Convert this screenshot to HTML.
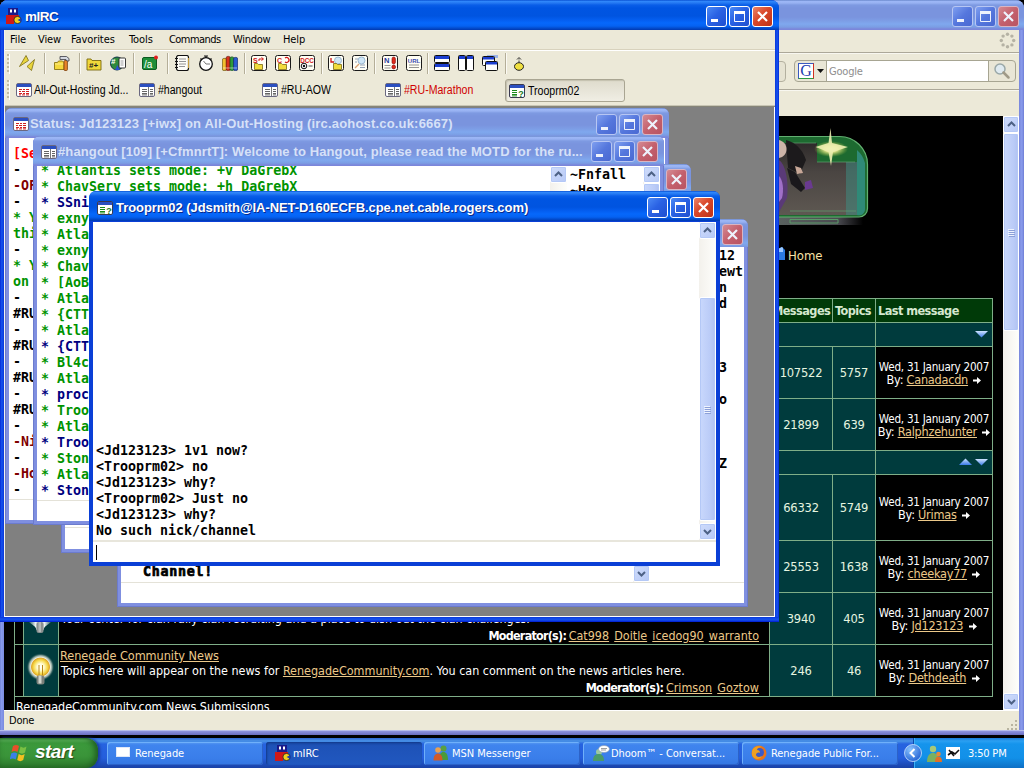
<!DOCTYPE html>
<html><head><meta charset="utf-8"><title>Desktop</title>
<style>
*{box-sizing:border-box;margin:0;padding:0}
html,body{width:1024px;height:768px;overflow:hidden;background:#000}
body{position:relative;font-family:"DejaVu Sans Condensed","Liberation Sans",sans-serif;font-size:11px;color:#000}
.a{position:absolute}
.ui{font-family:"DejaVu Sans Condensed","Liberation Sans",sans-serif;font-size:11px;white-space:nowrap;letter-spacing:-0.2px}
.fx{font-family:"DejaVu Sans Mono","Liberation Mono",monospace;font-weight:bold;font-size:13.3px;line-height:16px;white-space:pre}
.fx div{height:16px}
.tt{font-family:"Liberation Sans",sans-serif;font-weight:bold;font-size:13px;white-space:nowrap;color:#fff;text-shadow:1px 1px 0 #0a2a8a}
.tti{font-family:"Liberation Sans",sans-serif;font-weight:bold;font-size:13px;white-space:nowrap;color:#d6e1f8}
.sb{font-family:"Liberation Sans",sans-serif;font-size:12px;white-space:nowrap;transform-origin:0 0}
.g{color:#009300}.n{color:#00007f}.m{color:#7f0000}.r{color:#ff0000}
/* caption buttons */
.cb{position:absolute;width:21px;height:21px;border:1px solid #fff;border-radius:3px;background:linear-gradient(135deg,#4b8af5 0,#2a62e4 45%,#1f4fd0 100%)}
.cb.x{background:linear-gradient(135deg,#ec8468 0,#d9472a 45%,#bd3216 100%)}
.cb.i{border-color:#b7c6f3;background:linear-gradient(135deg,#7f9ff0 0,#5577dd 50%,#4a69d2 100%)}
.cb.i.x{border-color:#d9b5c3;background:linear-gradient(135deg,#d48a92 0,#c4606d 50%,#b85462 100%)}
.cb svg{position:absolute;left:0;top:0}
/* firefox */
#ff{left:0;top:0;width:1024px;height:735px;border-radius:8px 8px 0 0;overflow:hidden;background:linear-gradient(90deg,#6a7ad0 0,#8a9cec 1px,#7f90e4 3px,#7b8ade 4px,#7b8ade 1020px,#8a9cec 1021px,#7f90e4 1023px,#6a7ad0 1024px)}
#fftitle{left:0;top:0;width:1024px;height:30px;background:linear-gradient(#6a88cc 0,#9cb6f6 1.5px,#98b2f2 3px,#7e9ae2 5px,#7a94de 8px,#7a94de 17px,#7d9ee6 21px,#7fa8ee 24px,#7b9ee4 27px,#7b86da 29px,#7b86da 30px)}
#ffchrome{left:4px;top:30px;width:1015px;height:86px;background:#ece9d8}
#ffpage{left:4px;top:116px;width:999px;height:594px;background:#000;overflow:hidden;font-family:"DejaVu Sans Condensed","Liberation Sans",sans-serif;font-size:12.4px;color:#fff;white-space:nowrap}
#ffstatus{left:4px;top:710px;width:1015px;height:20px;background:#ece9d8;border-top:1px solid #fff}
#ffbot{left:0;top:730px;width:1024px;height:5px;background:linear-gradient(#cdd2f4 0,#8a90dc 1.5px,#7b80d2 3px,#6a6ec0 5px)}
/* mirc */
#mirc{left:0;top:0;width:779px;height:622px;background:linear-gradient(90deg,#0019cf 0,#1450ec 1px,#1048e6 3px,#0831d9 4px,#0831d9 775px,#1048e6 776px,#1450ec 778px,#0019cf 779px);border-radius:8px 8px 0 0}
#mbot{left:0;top:617px;width:779px;height:5px;background:linear-gradient(#0831d9 0,#1048e6 1px,#1450ec 3px,#0019cf 5px)}
#mtitle{left:0;top:0;width:779px;height:30px;border-radius:8px 8px 0 0;background:linear-gradient(#0a52d4 0,#2f86fa 1.5px,#2478f2 3px,#0a5ee8 5px,#0055e2 8px,#0054e0 16px,#045ef0 20px,#0668fb 23px,#0562f2 26px,#034ed0 28px,#0038b0 30px)}
#mchrome{left:4px;top:30px;width:771px;height:77px;background:#ece9d8}
#mdi{left:4px;top:107px;width:771px;height:510px;background:#808080;overflow:hidden}
.sep{position:absolute;top:53px;width:2px;height:22px;border-left:1px solid #aca899;border-right:1px solid #fff}
/* mdi child */
.w{position:absolute;border-radius:7px 7px 0 0}
.w.i{background:#7f8fe0;box-shadow:inset 0 0 0 1px #6c7bcd}
.w.ac{background:#0a3fd6}
.w .t{position:absolute;left:0;top:0;right:0;height:30px;border-radius:7px 7px 0 0}
.w.i .t{background:linear-gradient(#6a88cc 0,#9cb6f6 1.5px,#98b2f2 3px,#7e9ae2 5px,#7a94de 8px,#7a94de 17px,#7d9ee6 21px,#7fa8ee 24px,#7b9ee4 27px,#7b86da 29px,#7b86da 30px)}
.w.ac .t{background:linear-gradient(#0a52d4 0,#2f86fa 1.5px,#2478f2 3px,#0a5ee8 5px,#0055e2 8px,#0054e0 16px,#045ef0 20px,#0668fb 23px,#0562f2 26px,#034ed0 28px,#0038b0 30px)}
.w .c{position:absolute;left:4px;top:30px;right:4px;bottom:4px;background:#fff;overflow:hidden}
/* xp scrollbar */
.sv{position:absolute;width:17px;background:linear-gradient(90deg,#f3f1ec,#fefefb)}
.sbtn{position:absolute;left:0;width:17px;height:17px;border:1px solid #fff;border-radius:2px;background:linear-gradient(135deg,#cfdcfb,#b7c9f6);box-shadow:inset 0 0 0 1px #b4c8f6}
.sth{position:absolute;left:0;width:17px;border:1px solid #fff;border-radius:2px;background:linear-gradient(90deg,#c9d8fc,#bacbf7 70%,#b0c2f2);box-shadow:inset 0 0 0 1px #b4c8f6}
/* taskbar */
#tb{left:0;top:738px;width:1024px;height:30px;background:linear-gradient(#3168d5 0,#4993e6 3px,#2663e0 6px,#245edc 20px,#1941a5 30px)}
</style></head><body>
<div id="ff" class="a">
<div id="fftitle" class="a"></div>
<div class="cb i" style="left:952px;top:6px"><svg width="19" height="19" viewBox="0 0 19 19"><rect x="4" y="12" width="7" height="3" fill="#eef2fc"/></svg></div><div class="cb i" style="left:975px;top:6px"><svg width="19" height="19" viewBox="0 0 19 19"><path d="M4.5 5.5h10v9h-10z M4.5 6.5h10" fill="none" stroke="#eef2fc" stroke-width="1"/><rect x="4" y="4" width="11" height="3" fill="#eef2fc"/></svg></div><div class="cb x i" style="left:998px;top:6px"><svg width="19" height="19" viewBox="0 0 19 19"><path d="M5 5l9 9M14 5l-9 9" stroke="#eef2fc" stroke-width="2.2" fill="none"/></svg></div><div id="ffchrome" class="a"><div class="a" style="left:0px;top:22px;width:1015px;height:1px;background:#aca899;"></div><div class="a" style="left:0px;top:23px;width:1015px;height:1px;background:#f8f7f0;"></div><div class="a" style="left:0px;top:59px;width:1015px;height:1px;background:#aca899;"></div><div class="a" style="left:0px;top:60px;width:1015px;height:1px;background:#f8f7f0;"></div><div class="a" style="left:696px;top:31px;width:86px;height:21px;background:#e6e3d2;border:1px solid #b3b09f;border-radius:4px"></div><div class="a" style="left:790px;top:30px;width:222px;height:22px;background:#e9e6d6;border:1px solid #a7a592;border-radius:4px"></div><div class="a" style="left:822px;top:31px;width:163px;height:20px;background:#fff;border-left:1px solid #a7a592;border-right:1px solid #a7a592"></div><div class="a" style="left:794px;top:33px;width:16px;height:16px;background:#fff;border:1px solid #3a5ac0;border-right-color:#d03020;border-bottom-color:#2a9a40;font-family:'Liberation Serif',serif;font-size:16px;line-height:13px;color:#2040b0;text-align:center">G</div><svg class="a" style="left:813px;top:39px" width="7" height="4" viewBox="0 0 7 4"><path d="M0 0h7l-3.500 4z" fill="#111"/></svg><span class="a" style="left:825px;top:35px;font-size:11px;color:#8e8e8e;letter-spacing:-0.2px">Google</span><svg class="a" style="left:989px;top:32px" width="18" height="18" viewBox="0 0 18 18"><circle cx="7" cy="7" r="5" fill="#dfeaf0" stroke="#9aa8a8" stroke-width="1.500"/><path d="M10.500 10.500l5 5" stroke="#a09a88" stroke-width="2.500" stroke-linecap="round"/></svg><svg class="a" style="left:995px;top:2px" width="17" height="17" viewBox="0 0 17 17"><circle cx="14.7" cy="8.5" r="1.7" fill="#b5b2a4"/><circle cx="12.9" cy="12.9" r="1.7" fill="#b5b2a4"/><circle cx="8.5" cy="14.7" r="1.7" fill="#b5b2a4"/><circle cx="4.1" cy="12.9" r="1.7" fill="#b5b2a4"/><circle cx="2.3" cy="8.5" r="1.7" fill="#b5b2a4"/><circle cx="4.1" cy="4.1" r="1.7" fill="#b5b2a4"/><circle cx="8.5" cy="2.3" r="1.7" fill="#b5b2a4"/><circle cx="12.9" cy="4.1" r="1.7" fill="#b5b2a4"/></svg></div>
<div id="ffpage" class="a"><svg class="a" style="left:766px;top:10px" width="110" height="104" viewBox="770 126 110 104">
<defs><radialGradient id="fl"><stop offset="0" stop-color="#f4fbe8"/><stop offset="0.4" stop-color="#e6e890" stop-opacity="0.95"/><stop offset="1" stop-color="#a0c040" stop-opacity="0"/></radialGradient>
<linearGradient id="stn" x1="0" y1="0" x2="0" y2="1"><stop offset="0" stop-color="#2e2a2a"/><stop offset="0.4" stop-color="#4a4542"/><stop offset="1" stop-color="#5e5852"/></linearGradient>
<linearGradient id="bs" x1="0" y1="0" x2="1" y2="0"><stop offset="0" stop-color="#5a6260"/><stop offset="0.7" stop-color="#4a4a50"/><stop offset="1" stop-color="#000"/></linearGradient></defs>
<path d="M779 217h84v8h-84z" fill="url(#bs)"/>
<path d="M779 136.500h60a28 28 0 0 1 28.500 28v44a8.500 8.500 0 0 1-8.500 8.500h-80z" fill="#1d6a30"/>
<path d="M779 143h38v19h40v53h-78z" fill="url(#stn)"/>
<path d="M857 150v65a6 6 0 0 0 8-6v-46a26 26 0 0 0-8-13z" fill="#2f8a78"/>
<path d="M846 162h11v53h-11z" fill="#3f8a80" opacity="0.55"/>
<path d="M779 136.500h60a28 28 0 0 1 28.500 28v44a8.500 8.500 0 0 1-8.500 8.500h-80" fill="none" stroke="#62b070" stroke-width="1.200"/>
<path d="M790 143h26M817 162h38M790 211h66" stroke="#62a070" stroke-width="1" opacity="0.7"/>
<path d="M790 219.500h48v3.500h-48z" fill="none" stroke="#5a9a68" stroke-width="1"/>
<path d="M786 140c8 2 16 8 20 20l-6 14-12-6z" fill="#1c1a1c"/>
<path d="M779 140c4 1 7.500 4 7.500 9s-3 8-7.500 9z" fill="#cdb4a8"/>
<path d="M779 160c6 4 10 20 8 38l-8 14z" fill="#5a3a78"/>
<path d="M779 176c4 4 5 14 3 22l-3 4z" fill="#a070c8"/>
<path d="M787 168l8 4 10 16-4 4-10-8z" fill="#1a181c"/>
<path d="M795 166l6 2 2 5-6 1z" fill="#c8a898"/>
<path d="M805 182l6-2 2 8-8 2z" fill="#6a3a90"/>
<ellipse cx="831" cy="149" rx="17" ry="8" fill="url(#fl)"/>
<path d="M830.500 128l1.500 15 16 4-15 5-2 14-2.500-14-13-5 13-4z" fill="#eef0b0" opacity="0.9"/>
</svg><svg class="a" style="left:774px;top:131px" width="8" height="14" viewBox="0 0 8 14"><path d="M0 2l4-2 3 3v10h-7z" fill="#2a7ae0"/><path d="M0 2l4-2 1 1v4h-5z" fill="#9ac8ff"/></svg><div class="a " style="left:784px;top:132px;color:#f7e2a6;font-size:13px">Home</div><div class="a" style="left:10px;top:182px;width:979px;height:25px;background:#003a08;"></div><div class="a" style="left:10px;top:207px;width:979px;height:24px;background:#003b3d;"></div><div class="a" style="left:20px;top:231px;width:34px;height:52px;background:#003b3d;"></div><div class="a" style="left:766px;top:231px;width:105px;height:52px;background:#003b3d;"></div><div class="a" style="left:20px;top:283px;width:34px;height:52px;background:#003b3d;"></div><div class="a" style="left:766px;top:283px;width:105px;height:52px;background:#003b3d;"></div><div class="a" style="left:10px;top:335px;width:979px;height:24px;background:#003b3d;"></div><div class="a" style="left:20px;top:359px;width:34px;height:66px;background:#003b3d;"></div><div class="a" style="left:766px;top:359px;width:105px;height:66px;background:#003b3d;"></div><div class="a" style="left:20px;top:425px;width:34px;height:52px;background:#003b3d;"></div><div class="a" style="left:766px;top:425px;width:105px;height:52px;background:#003b3d;"></div><div class="a" style="left:20px;top:477px;width:34px;height:52px;background:#003b3d;"></div><div class="a" style="left:766px;top:477px;width:105px;height:52px;background:#003b3d;"></div><div class="a" style="left:20px;top:529px;width:34px;height:52px;background:#003b3d;"></div><div class="a" style="left:766px;top:529px;width:105px;height:52px;background:#003b3d;"></div><div class="a" style="left:10px;top:182px;width:979px;height:1px;background:#7fae88;"></div><div class="a" style="left:10px;top:206px;width:979px;height:1px;background:#7fae88;"></div><div class="a" style="left:10px;top:230px;width:979px;height:1px;background:#7fae88;"></div><div class="a" style="left:10px;top:282px;width:979px;height:1px;background:#7fae88;"></div><div class="a" style="left:10px;top:334px;width:979px;height:1px;background:#7fae88;"></div><div class="a" style="left:10px;top:358px;width:979px;height:1px;background:#7fae88;"></div><div class="a" style="left:10px;top:424px;width:979px;height:1px;background:#7fae88;"></div><div class="a" style="left:10px;top:476px;width:979px;height:1px;background:#7fae88;"></div><div class="a" style="left:10px;top:528px;width:979px;height:1px;background:#7fae88;"></div><div class="a" style="left:10px;top:580px;width:979px;height:1px;background:#7fae88;"></div><div class="a" style="left:10px;top:182px;width:1px;height:412px;background:#7fae88;"></div><div class="a" style="left:988px;top:182px;width:1px;height:399px;background:#7fae88;"></div><div class="a" style="left:871px;top:207px;width:1px;height:23px;background:#7fae88;"></div><div class="a" style="left:19px;top:231px;width:1px;height:51px;background:#7fae88;"></div><div class="a" style="left:54px;top:231px;width:1px;height:51px;background:#7fae88;"></div><div class="a" style="left:765px;top:231px;width:1px;height:51px;background:#7fae88;"></div><div class="a" style="left:828px;top:231px;width:1px;height:51px;background:#7fae88;"></div><div class="a" style="left:871px;top:231px;width:1px;height:51px;background:#7fae88;"></div><div class="a" style="left:19px;top:283px;width:1px;height:51px;background:#7fae88;"></div><div class="a" style="left:54px;top:283px;width:1px;height:51px;background:#7fae88;"></div><div class="a" style="left:765px;top:283px;width:1px;height:51px;background:#7fae88;"></div><div class="a" style="left:828px;top:283px;width:1px;height:51px;background:#7fae88;"></div><div class="a" style="left:871px;top:283px;width:1px;height:51px;background:#7fae88;"></div><div class="a" style="left:871px;top:335px;width:1px;height:23px;background:#7fae88;"></div><div class="a" style="left:19px;top:359px;width:1px;height:65px;background:#7fae88;"></div><div class="a" style="left:54px;top:359px;width:1px;height:65px;background:#7fae88;"></div><div class="a" style="left:765px;top:359px;width:1px;height:65px;background:#7fae88;"></div><div class="a" style="left:828px;top:359px;width:1px;height:65px;background:#7fae88;"></div><div class="a" style="left:871px;top:359px;width:1px;height:65px;background:#7fae88;"></div><div class="a" style="left:19px;top:425px;width:1px;height:51px;background:#7fae88;"></div><div class="a" style="left:54px;top:425px;width:1px;height:51px;background:#7fae88;"></div><div class="a" style="left:765px;top:425px;width:1px;height:51px;background:#7fae88;"></div><div class="a" style="left:828px;top:425px;width:1px;height:51px;background:#7fae88;"></div><div class="a" style="left:871px;top:425px;width:1px;height:51px;background:#7fae88;"></div><div class="a" style="left:19px;top:477px;width:1px;height:51px;background:#7fae88;"></div><div class="a" style="left:54px;top:477px;width:1px;height:51px;background:#7fae88;"></div><div class="a" style="left:765px;top:477px;width:1px;height:51px;background:#7fae88;"></div><div class="a" style="left:828px;top:477px;width:1px;height:51px;background:#7fae88;"></div><div class="a" style="left:871px;top:477px;width:1px;height:51px;background:#7fae88;"></div><div class="a" style="left:19px;top:529px;width:1px;height:51px;background:#7fae88;"></div><div class="a" style="left:54px;top:529px;width:1px;height:51px;background:#7fae88;"></div><div class="a" style="left:765px;top:529px;width:1px;height:51px;background:#7fae88;"></div><div class="a" style="left:828px;top:529px;width:1px;height:51px;background:#7fae88;"></div><div class="a" style="left:871px;top:529px;width:1px;height:51px;background:#7fae88;"></div><div class="a" style="left:828px;top:182px;width:1px;height:24px;background:#7fae88;"></div><div class="a" style="left:871px;top:182px;width:1px;height:24px;background:#7fae88;"></div><div class="a " style="left:768px;top:187px;font-weight:bold;font-size:12.6px;color:#d5e8cf;letter-spacing:-0.55px">Messages</div><div class="a " style="left:831px;top:187px;font-weight:bold;font-size:12.6px;color:#d5e8cf;letter-spacing:-0.55px">Topics</div><div class="a " style="left:874px;top:187px;font-weight:bold;font-size:12.6px;color:#d5e8cf;letter-spacing:-0.55px">Last message</div><svg class="a" style="left:971px;top:214px" width="13" height="8" viewBox="0 0 13 8"><defs><linearGradient id="tg975330" x1="0" y1="0" x2="0" y2="1"><stop offset="0" stop-color="#cfe4ff"/><stop offset="1" stop-color="#3a7ae8"/></linearGradient></defs><path d="M0 1h13l-6.500 6.500z" fill="url(#tg975330)"/></svg><svg class="a" style="left:955px;top:342px" width="13" height="8" viewBox="0 0 13 8"><defs><linearGradient id="tg959458" x1="0" y1="0" x2="0" y2="1"><stop offset="0" stop-color="#cfe4ff"/><stop offset="1" stop-color="#3a7ae8"/></linearGradient></defs><path d="M0 7l6.500-6.500L13 7z" fill="url(#tg959458)"/></svg><svg class="a" style="left:971px;top:342px" width="13" height="8" viewBox="0 0 13 8"><defs><linearGradient id="tg975458" x1="0" y1="0" x2="0" y2="1"><stop offset="0" stop-color="#cfe4ff"/><stop offset="1" stop-color="#3a7ae8"/></linearGradient></defs><path d="M0 1h13l-6.500 6.500z" fill="url(#tg975458)"/></svg><div class="a " style="left:766px;top:249px;color:#e6f5e0;font-size:12.8px;text-align:center;letter-spacing:-0.2px;width:62px">107522</div><div class="a " style="left:829px;top:249px;color:#e6f5e0;font-size:12.8px;text-align:center;letter-spacing:-0.2px;width:42px">5757</div><div class="a " style="left:872px;top:244px;width:116px;text-align:center;font-size:11.6px;letter-spacing:-0.25px;color:#fff">Wed, 31 January 2007</div><div class="a " style="left:872px;top:256px;width:116px;text-align:center;font-size:12.6px;letter-spacing:-0.25px;color:#fff">By: <span style="color:#ecc98a;text-decoration:underline">Canadacdn</span> <svg width="8" height="7" viewBox="0 0 8 7" style="margin-left:2px"><path d="M0 2.500h4v-2.500l4 3.500-4 3.500v-2.500h-4z" fill="#fff"/></svg></div><div class="a " style="left:766px;top:301px;color:#e6f5e0;font-size:12.8px;text-align:center;letter-spacing:-0.2px;width:62px">21899</div><div class="a " style="left:829px;top:301px;color:#e6f5e0;font-size:12.8px;text-align:center;letter-spacing:-0.2px;width:42px">639</div><div class="a " style="left:872px;top:296px;width:116px;text-align:center;font-size:11.6px;letter-spacing:-0.25px;color:#fff">Wed, 31 January 2007</div><div class="a " style="left:872px;top:308px;width:116px;text-align:center;font-size:12.6px;letter-spacing:-0.25px;color:#fff">By: <span style="color:#ecc98a;text-decoration:underline">Ralphzehunter</span> <svg width="8" height="7" viewBox="0 0 8 7" style="margin-left:2px"><path d="M0 2.500h4v-2.500l4 3.500-4 3.500v-2.500h-4z" fill="#fff"/></svg></div><div class="a " style="left:766px;top:384px;color:#e6f5e0;font-size:12.8px;text-align:center;letter-spacing:-0.2px;width:62px">66332</div><div class="a " style="left:829px;top:384px;color:#e6f5e0;font-size:12.8px;text-align:center;letter-spacing:-0.2px;width:42px">5749</div><div class="a " style="left:872px;top:379px;width:116px;text-align:center;font-size:11.6px;letter-spacing:-0.25px;color:#fff">Wed, 31 January 2007</div><div class="a " style="left:872px;top:391px;width:116px;text-align:center;font-size:12.6px;letter-spacing:-0.25px;color:#fff">By: <span style="color:#ecc98a;text-decoration:underline">Urimas</span> <svg width="8" height="7" viewBox="0 0 8 7" style="margin-left:2px"><path d="M0 2.500h4v-2.500l4 3.500-4 3.500v-2.500h-4z" fill="#fff"/></svg></div><div class="a " style="left:766px;top:443px;color:#e6f5e0;font-size:12.8px;text-align:center;letter-spacing:-0.2px;width:62px">25553</div><div class="a " style="left:829px;top:443px;color:#e6f5e0;font-size:12.8px;text-align:center;letter-spacing:-0.2px;width:42px">1638</div><div class="a " style="left:872px;top:438px;width:116px;text-align:center;font-size:11.6px;letter-spacing:-0.25px;color:#fff">Wed, 31 January 2007</div><div class="a " style="left:872px;top:450px;width:116px;text-align:center;font-size:12.6px;letter-spacing:-0.25px;color:#fff">By: <span style="color:#ecc98a;text-decoration:underline">cheekay77</span> <svg width="8" height="7" viewBox="0 0 8 7" style="margin-left:2px"><path d="M0 2.500h4v-2.500l4 3.500-4 3.500v-2.500h-4z" fill="#fff"/></svg></div><div class="a " style="left:766px;top:495px;color:#e6f5e0;font-size:12.8px;text-align:center;letter-spacing:-0.2px;width:62px">3940</div><div class="a " style="left:829px;top:495px;color:#e6f5e0;font-size:12.8px;text-align:center;letter-spacing:-0.2px;width:42px">405</div><div class="a " style="left:872px;top:490px;width:116px;text-align:center;font-size:11.6px;letter-spacing:-0.25px;color:#fff">Wed, 31 January 2007</div><div class="a " style="left:872px;top:502px;width:116px;text-align:center;font-size:12.6px;letter-spacing:-0.25px;color:#fff">By: <span style="color:#ecc98a;text-decoration:underline">Jd123123</span> <svg width="8" height="7" viewBox="0 0 8 7" style="margin-left:2px"><path d="M0 2.500h4v-2.500l4 3.500-4 3.500v-2.500h-4z" fill="#fff"/></svg></div><div class="a " style="left:766px;top:547px;color:#e6f5e0;font-size:12.8px;text-align:center;letter-spacing:-0.2px;width:62px">246</div><div class="a " style="left:829px;top:547px;color:#e6f5e0;font-size:12.8px;text-align:center;letter-spacing:-0.2px;width:42px">46</div><div class="a " style="left:872px;top:542px;width:116px;text-align:center;font-size:11.6px;letter-spacing:-0.25px;color:#fff">Wed, 31 January 2007</div><div class="a " style="left:872px;top:554px;width:116px;text-align:center;font-size:12.6px;letter-spacing:-0.25px;color:#fff">By: <span style="color:#ecc98a;text-decoration:underline">Dethdeath</span> <svg width="8" height="7" viewBox="0 0 8 7" style="margin-left:2px"><path d="M0 2.500h4v-2.500l4 3.500-4 3.500v-2.500h-4z" fill="#fff"/></svg></div><div class="a " style="left:57px;top:494.5px;font-size:12.45px;color:#fff;letter-spacing:0">Your center for clan rally clan recruiting and a place to dish out the clan challenges.</div><div class="a" style="right:244px;top:512px;font-size:12.45px;color:#fff;word-spacing:-1px"><b style="letter-spacing:-0.75px">Moderator(s):</b> <span style="color:#ecc98a;text-decoration:underline">Cat998</span> &nbsp;<span style="color:#ecc98a;text-decoration:underline">Doitle</span> &nbsp;<span style="color:#ecc98a;text-decoration:underline">icedog90</span> &nbsp;<span style="color:#ecc98a;text-decoration:underline">warranto</span></div><div class="a " style="left:56px;top:532px;font-size:12.6px;letter-spacing:-0.05px"><span style="color:#ecc98a;text-decoration:underline">Renegade Community News</span></div><div class="a " style="left:57px;top:547px;font-size:12.45px;color:#fff;letter-spacing:0">Topics here will appear on the news for <span style="color:#ecc98a;text-decoration:underline">RenegadeCommunity.com</span>. You can comment on the news articles here.</div><div class="a" style="right:244px;top:564px;font-size:12.45px;color:#fff;word-spacing:-1px"><b style="letter-spacing:-0.75px">Moderator(s):</b> <span style="color:#ecc98a;text-decoration:underline">Crimson</span> &nbsp;<span style="color:#ecc98a;text-decoration:underline">Goztow</span></div><div class="a " style="left:12px;top:583px;font-size:12.45px;color:#fff;letter-spacing:0">RenegadeCommunity.com News Submissions</div><svg class="a" style="left:20px;top:506px" width="34" height="22" viewBox="24 622 34 22"><defs><linearGradient id="b0" x1="0" y1="0" x2="1" y2="0"><stop offset="0" stop-color="#e8f0f0" stop-opacity="0.2"/><stop offset="0.3" stop-color="#eef4f4"/><stop offset="0.5" stop-color="#8a9494"/><stop offset="0.7" stop-color="#eef4f4"/><stop offset="1" stop-color="#e8f0f0" stop-opacity="0.2"/></linearGradient></defs><path d="M29 622C32 625 36 626 36.500 630L43.500 630C44 626 48 625 51 622z" fill="url(#b0)"/><rect x="36.500" y="622" width="7" height="11" rx="2.500" fill="#8a9090"/><rect x="38.500" y="622" width="2.500" height="10" fill="#b4b8b8"/></svg><svg class="a" style="left:20px;top:532px" width="34" height="46" viewBox="0 0 34 46"><defs><radialGradient id="b1"><stop offset="0" stop-color="#ffffff"/><stop offset="0.25" stop-color="#fffbd0"/><stop offset="0.5" stop-color="#f6d848"/><stop offset="0.64" stop-color="#e0a828"/><stop offset="0.7" stop-color="#f4f4e8" stop-opacity="0.95"/><stop offset="0.82" stop-color="#e8ece0" stop-opacity="0.6"/><stop offset="1" stop-color="#003535" stop-opacity="0"/></radialGradient></defs><circle cx="16.500" cy="19" r="14" fill="url(#b1)"/><path d="M15 17v10M18.500 17v10" stroke="#b88818" stroke-width="1"/><rect x="12.500" y="27.500" width="8" height="9" rx="2.500" fill="#7a807a"/><rect x="14.500" y="27.500" width="3" height="8" fill="#d0d4cc"/></svg></div>
<div id="ffscroll" class="a sv" style="left:1003px;top:116px;height:594px;width:16px"><div class="sbtn" style="top:0;width:16px"><svg class="a" style="left:3px;top:4px" width="9" height="6" viewBox="0 0 9 6"><path d="M1 5l3.500-3.500L8 5" fill="none" stroke="#4d6185" stroke-width="2"/></svg></div><div class="sbtn" style="top:577px;width:16px"><svg class="a" style="left:3px;top:5px" width="9" height="6" viewBox="0 0 9 6"><path d="M1 1l3.500 3.500L8 1" fill="none" stroke="#4d6185" stroke-width="2"/></svg></div><div class="sth" style="top:17px;height:198px;width:16px"><svg class="a" style="left:4px;top:95px" width="7" height="8" viewBox="0 0 7 8"><path d="M0 .5h6M0 2.500h6M0 4.500h6M0 6.500h6" stroke="#eef3fe"/><path d="M1 1.500h6M1 3.500h6M1 5.500h6M1 7.500h6" stroke="#8ca0d8"/></svg></div></div>
<div id="ffstatus" class="a ui"><span class="a" style="left:5px;top:3px;font-size:11px">Done</span><svg class="a" style="left:1001px;top:7px" width="12" height="12" viewBox="0 0 12 12"><path d="M10 2h2v2h-2zM6 6h2v2h-2zM10 6h2v2h-2zM2 10h2v2h-2zM6 10h2v2h-2zM10 10h2v2h-2z" fill="#b8b4a0"/></svg></div><div id="ffbot" class="a"></div>
</div>
<div id="mirc" class="a">
<div id="mtitle" class="a"><svg class="a" style="left:6px;top:8px" width="16" height="16" viewBox="0 0 16 16"><rect x="2" y="0" width="10" height="8" fill="#1a1a8a"/><rect x="4" y="1.500" width="2" height="3" fill="#fff"/><rect x="8" y="1.500" width="2" height="3" fill="#fff"/><rect x="0" y="7" width="8" height="9" fill="#d01818"/><rect x="7" y="7" width="6" height="4" fill="#d01818"/><circle cx="11.500" cy="12" r="3.600" fill="#f0d020" stroke="#222" stroke-width="0.800"/><path d="M11.500 12l4-2v4z" fill="#1a3ab0"/></svg><span class="a tt" style="left:25px;top:9px;font-size:13.5px;letter-spacing:-0.5px">mIRC</span></div>
<div class="cb" style="left:706px;top:6px"><svg width="19" height="19" viewBox="0 0 19 19"><rect x="4" y="12" width="7" height="3" fill="#fff"/></svg></div><div class="cb" style="left:729px;top:6px"><svg width="19" height="19" viewBox="0 0 19 19"><path d="M4.5 5.5h10v9h-10z M4.5 6.5h10" fill="none" stroke="#fff" stroke-width="1"/><rect x="4" y="4" width="11" height="3" fill="#fff"/></svg></div><div class="cb x" style="left:752px;top:6px"><svg width="19" height="19" viewBox="0 0 19 19"><path d="M5 5l9 9M14 5l-9 9" stroke="#fff" stroke-width="2.2" fill="none"/></svg></div><div id="mchrome" class="a"><span class="a ui" style="left:6px;top:3px;letter-spacing:-0.1px">File</span><span class="a ui" style="left:34px;top:3px;letter-spacing:-0.1px">View</span><span class="a ui" style="left:67px;top:3px;letter-spacing:-0.1px">Favorites</span><span class="a ui" style="left:125px;top:3px;letter-spacing:-0.1px">Tools</span><span class="a ui" style="left:165px;top:3px;letter-spacing:-0.55px">Commands</span><span class="a ui" style="left:229px;top:3px;letter-spacing:-0.3px">Window</span><span class="a ui" style="left:279px;top:3px;letter-spacing:-0.1px">Help</span><div class="a" style="left:0;right:0;top:19px;height:1px;background:#d8d2bd"></div><div class="a" style="left:0;right:0;top:20px;height:1px;background:#fff"></div><div class="a" style="left:3px;top:24px;width:3px;height:20px;background:repeating-linear-gradient(#c2bca4 0 2px,#ece9d8 2px 4px);border-right:1px solid #fff"></div><div class="a" style="left:3px;top:50px;width:3px;height:20px;background:repeating-linear-gradient(#c2bca4 0 2px,#ece9d8 2px 4px);border-right:1px solid #fff"></div><svg class="a" style="left:15px;top:25px" width="16" height="16" viewBox="0 0 16 16"><path d="M0.500 11.500L7 0.500L9.500 5.500z" fill="#e9d53c" stroke="#7a6c14" stroke-width="0.800"/><path d="M8 11.500L15.500 4.500L12.500 15.500z" fill="#e9d53c" stroke="#7a6c14" stroke-width="0.800"/></svg><svg class="a" style="left:50px;top:25px" width="16" height="16" viewBox="0 0 16 16"><path d="M0.500 7.500h3l1-1.500h4l1.500 1.500v7h-9.500z" fill="#f4d83c" stroke="#8a7412" stroke-width="0.900"/><path d="M1 9h8.500" stroke="#fff3a0" stroke-width="0.800"/><rect x="10" y="5.500" width="3.400" height="10" rx="1" fill="#e8842a" stroke="#7a3c0a" stroke-width="0.800"/><path d="M6 1.500h6.500l2.500 2v2.500h-2l-1-1.500h-6z" fill="#d4d8e0" stroke="#3a3a44" stroke-width="0.800"/></svg><svg class="a" style="left:82px;top:25px" width="16" height="16" viewBox="0 0 16 16"><path d="M1 4h4l1 1.500h9v9.500h-14z" fill="#f0d83a" stroke="#7a6a10" stroke-width="0.9"/><text x="3" y="13" font-family="Liberation Sans,sans-serif" font-size="8" font-weight="bold" fill="#222">#+</text></svg><svg class="a" style="left:106px;top:25px" width="16" height="16" viewBox="0 0 16 16"><circle cx="7" cy="8.500" r="6.500" fill="#2e8b3e" stroke="#134"/><path d="M5 15l2.500-5 2.500 5z" fill="#2a4fd0"/><rect x="9" y="3" width="6.500" height="10" rx="1" fill="#fff" stroke="#222" stroke-width="0.9"/><path d="M10.500 6h3M10.500 8h3M10.500 10h3" stroke="#888" stroke-width="0.8"/><text x="1" y="9" font-family="Liberation Sans,sans-serif" font-size="8" font-weight="bold" fill="#fff">#</text></svg><svg class="a" style="left:138px;top:25px" width="16" height="16" viewBox="0 0 16 16"><rect x="0.500" y="2.500" width="14" height="12" rx="1.500" fill="#1f8f3a" stroke="#0e5a20"/><text x="2" y="12.5" font-family="Liberation Sans,sans-serif" font-size="10"  fill="#fff">/a</text><circle cx="14" cy="2.500" r="2" fill="#e02020"/></svg><svg class="a" style="left:170px;top:25px" width="16" height="16" viewBox="0 0 16 16"><rect x="2.500" y="0.500" width="12" height="15" rx="2" fill="#fffef8" stroke="#111" stroke-width="1.200"/><path d="M5 4h7M5 6.500h7M5 9h7M5 11.500h6" stroke="#888" stroke-width="0.900"/><path d="M1 3.500h3M1 6.500h3M1 9.500h3M1 12.500h3" stroke="#111" stroke-width="1.200"/><path d="M14.500 3v10" stroke="#c9a040"/></svg><svg class="a" style="left:194px;top:25px" width="16" height="16" viewBox="0 0 16 16"><circle cx="8" cy="9" r="6.300" fill="#fff" stroke="#111" stroke-width="1.300"/><path d="M6 1h4M8 1v2M2.500 3.500l1.500 1.500M13.500 3.500l-1.500 1.500" stroke="#111" stroke-width="1.200"/><path d="M8 9l-2.500-3M8 9h4" stroke="#777" stroke-width="1"/></svg><svg class="a" style="left:218px;top:25px" width="16" height="16" viewBox="0 0 16 16"><rect x="0.400" y="3.400" width="4.200" height="12.200" rx="1.500" fill="#f0c030" stroke="#6a5410" stroke-width="0.700"/><rect x="4.200" y="1.400" width="4" height="14.200" rx="1.500" fill="#d8301c" stroke="#6a1208" stroke-width="0.700"/><rect x="8" y="1.900" width="3.800" height="13.700" rx="1.500" fill="#2e9a3a" stroke="#104a18" stroke-width="0.700"/><rect x="11.600" y="2.400" width="4" height="13.200" rx="1.500" fill="#2a5ad0" stroke="#102a70" stroke-width="0.700"/><path d="M1 13h14" stroke="#fff" stroke-opacity="0.450" stroke-width="1.200"/></svg><svg class="a" style="left:247px;top:25px" width="16" height="16" viewBox="0 0 16 16"><rect x="0.5" y="0.5" width="15" height="15" rx="2" fill="#fffef4" stroke="#1a1a1a"/><text x="2" y="7.5" font-family="Liberation Sans,sans-serif" font-size="7" font-weight="bold" fill="#d01818">S</text><path d="M8 6v-2h4M10.500 2.500l2 1.500-2 1.500" stroke="#d01818" fill="none"/><path d="M3.5 8.5h3l1 1h4v5h-8z" fill="#f2dc3c" stroke="#7a6a10" stroke-width="0.8"/></svg><svg class="a" style="left:271px;top:25px" width="16" height="16" viewBox="0 0 16 16"><rect x="0.5" y="0.5" width="15" height="15" rx="2" fill="#fffef4" stroke="#1a1a1a"/><text x="2" y="7.5" font-family="Liberation Sans,sans-serif" font-size="7" font-weight="bold" fill="#d01818">C</text><path d="M10 3a2.500 2.500 0 1 1 0 4" stroke="#d01818" fill="none" stroke-width="1.200"/><path d="M3.5 8.5h3l1 1h4v5h-8z" fill="#f2dc3c" stroke="#7a6a10" stroke-width="0.8"/></svg><svg class="a" style="left:295px;top:25px" width="16" height="16" viewBox="0 0 16 16"><rect x="0.5" y="0.5" width="15" height="15" rx="2" fill="#fffef4" stroke="#1a1a1a"/><text x="1.2" y="7.5" font-family="Liberation Sans,sans-serif" font-size="6.3" font-weight="bold" fill="#d01818">DCC</text><circle cx="5" cy="11" r="2.800" fill="#fff" stroke="#111"/><circle cx="5" cy="11" r="1.200" fill="#111"/><path d="M9.500 11h4" stroke="#888" stroke-width="1.500"/></svg><svg class="a" style="left:324px;top:25px" width="16" height="16" viewBox="0 0 16 16"><rect x="0.5" y="0.5" width="15" height="15" rx="2" fill="#fffef4" stroke="#1a1a1a"/><circle cx="10" cy="5.500" r="3.500" fill="#cfe6f6" stroke="#9bb8d0"/><path d="M3 3v4h3" stroke="#d01818" fill="none" stroke-width="1.300"/><path d="M5.5 8.5h3l1 1h4v5h-8z" fill="#f2dc3c" stroke="#7a6a10" stroke-width="0.8"/></svg><svg class="a" style="left:348px;top:25px" width="16" height="16" viewBox="0 0 16 16"><rect x="0.5" y="0.5" width="15" height="15" rx="2" fill="#fffef4" stroke="#1a1a1a"/><circle cx="9.500" cy="5.500" r="3.500" fill="#cfe6f6" stroke="#9bb8d0"/><path d="M3 4h3M3 7h2M8 10h5M8 12.500h5" stroke="#8898b0" stroke-width="0.900"/><path d="M3 13l4-4" stroke="#d8a070" stroke-width="1.300"/></svg><svg class="a" style="left:378px;top:25px" width="16" height="16" viewBox="0 0 16 16"><rect x="0.5" y="0.5" width="15" height="15" rx="2" fill="#fffef4" stroke="#1a1a1a"/><text x="2" y="8" font-family="Liberation Sans,sans-serif" font-size="7.5" font-weight="bold" fill="#2a3aa0">N</text><path d="M2.500 10.500h6M2.500 13h6" stroke="#888" stroke-width="0.900"/><rect x="10" y="2" width="3.400" height="7" rx="1.700" fill="#e02a1a" stroke="#7a0a0a" stroke-width="0.600"/><circle cx="11.700" cy="12" r="1.900" fill="#e02a1a" stroke="#7a0a0a" stroke-width="0.600"/></svg><svg class="a" style="left:402px;top:25px" width="16" height="16" viewBox="0 0 16 16"><rect x="0.5" y="0.5" width="15" height="15" rx="2" fill="#fffef4" stroke="#1a1a1a"/><text x="1.8" y="7.5" font-family="Liberation Sans,sans-serif" font-size="6" font-weight="bold" fill="#3a4ab0">URL</text><path d="M3 10h10M3 12.500h10" stroke="#888" stroke-width="0.900"/></svg><svg class="a" style="left:430px;top:25px" width="16" height="16" viewBox="0 0 16 16"><rect x="0.500" y="0.500" width="15" height="7" rx="1" fill="#fff" stroke="#111"/><rect x="1" y="1" width="14" height="3" fill="#1c3fd0"/><rect x="0.500" y="8.500" width="15" height="7" rx="1" fill="#fff" stroke="#111"/><rect x="1" y="9" width="14" height="3" fill="#1c3fd0"/></svg><svg class="a" style="left:454px;top:25px" width="16" height="16" viewBox="0 0 16 16"><rect x="0.500" y="0.500" width="7" height="15" rx="1" fill="#fff" stroke="#111"/><rect x="1" y="1" width="6" height="3" fill="#1c3fd0"/><rect x="8.500" y="0.500" width="7" height="15" rx="1" fill="#fff" stroke="#111"/><rect x="9" y="1" width="6" height="3" fill="#1c3fd0"/></svg><svg class="a" style="left:478px;top:25px" width="16" height="16" viewBox="0 0 16 16"><rect x="5" y="0" width="11" height="3" fill="#9ab4e8"/><rect x="0.500" y="1.500" width="12" height="9" rx="1" fill="#fff" stroke="#111"/><rect x="1" y="2" width="11" height="2.500" fill="#1c3fd0"/><rect x="3.500" y="6.500" width="12" height="9" rx="1" fill="#fff" stroke="#111"/><rect x="4" y="7" width="11" height="2.500" fill="#1c3fd0"/></svg><svg class="a" style="left:508px;top:25px" width="16" height="16" viewBox="0 0 16 16"><ellipse cx="7" cy="11.500" rx="4.500" ry="3.800" fill="#f0e040" stroke="#222"/><path d="M7 7.500v-2M5 4.500l2-2 2 2M7 3.500v1" stroke="#222" fill="none" stroke-width="0.900"/></svg><div class="a" style="left:40px;top:23px;width:2px;height:21px;border-left:1px solid #b4ae98;border-right:1px solid #fbfaf4"></div><div class="a" style="left:75px;top:23px;width:2px;height:21px;border-left:1px solid #b4ae98;border-right:1px solid #fbfaf4"></div><div class="a" style="left:129px;top:23px;width:2px;height:21px;border-left:1px solid #b4ae98;border-right:1px solid #fbfaf4"></div><div class="a" style="left:163px;top:23px;width:2px;height:21px;border-left:1px solid #b4ae98;border-right:1px solid #fbfaf4"></div><div class="a" style="left:240px;top:23px;width:2px;height:21px;border-left:1px solid #b4ae98;border-right:1px solid #fbfaf4"></div><div class="a" style="left:317px;top:23px;width:2px;height:21px;border-left:1px solid #b4ae98;border-right:1px solid #fbfaf4"></div><div class="a" style="left:370px;top:23px;width:2px;height:21px;border-left:1px solid #b4ae98;border-right:1px solid #fbfaf4"></div><div class="a" style="left:423px;top:23px;width:2px;height:21px;border-left:1px solid #b4ae98;border-right:1px solid #fbfaf4"></div><div class="a" style="left:501px;top:23px;width:2px;height:21px;border-left:1px solid #b4ae98;border-right:1px solid #fbfaf4"></div><svg class="a" style="left:12px;top:52px" width="16" height="16" viewBox="0 0 16 16"><rect x="0.5" y="1.5" width="15" height="13" rx="1.5" fill="#fff" stroke="#6a6880"/><rect x="1" y="2" width="14" height="3" fill="#2b4fc0"/><path d="M3 7.5h3M7 7.5h2M10 7.5h3M3 9.5h2M6 9.5h3M10 9.5h3M3 11.5h3M7 11.5h2M10 11.5h3M3 12.9h2M6 12.9h3M10 12.9h3" stroke="#d02020" stroke-width="1"/></svg><span class="a sb" style="left:30px;top:53px;color:#000;transform:scaleX(0.88)">All-Out-Hosting Jd...</span><svg class="a" style="left:135px;top:52px" width="16" height="16" viewBox="0 0 16 16"><rect x="0.5" y="1.5" width="15" height="13" rx="1.5" fill="#fff" stroke="#6a6880"/><rect x="1" y="2" width="14" height="3" fill="#2b4fc0"/><path d="M9.5 5v9" stroke="#777"/><path d="M3 7.5h5M3 9.5h5M3 11.5h5M3 12.9h5M11 7.5h3M11 9.5h3M11 11.5h3M11 12.9h3" stroke="#666" stroke-width="1"/></svg><span class="a sb" style="left:154px;top:53px;color:#000;transform:scaleX(0.88)">#hangout</span><svg class="a" style="left:258px;top:52px" width="16" height="16" viewBox="0 0 16 16"><rect x="0.5" y="1.5" width="15" height="13" rx="1.5" fill="#fff" stroke="#6a6880"/><rect x="1" y="2" width="14" height="3" fill="#2b4fc0"/><path d="M9.5 5v9" stroke="#777"/><path d="M3 7.5h5M3 9.5h5M3 11.5h5M3 12.9h5M11 7.5h3M11 9.5h3M11 11.5h3M11 12.9h3" stroke="#666" stroke-width="1"/></svg><span class="a sb" style="left:277px;top:53px;color:#000;transform:scaleX(0.88)">#RU-AOW</span><svg class="a" style="left:381px;top:52px" width="16" height="16" viewBox="0 0 16 16"><rect x="0.5" y="1.5" width="15" height="13" rx="1.5" fill="#fff" stroke="#6a6880"/><rect x="1" y="2" width="14" height="3" fill="#2b4fc0"/><path d="M9.5 5v9" stroke="#777"/><path d="M3 7.5h5M3 9.5h5M3 11.5h5M3 12.9h5M11 7.5h3M11 9.5h3M11 11.5h3M11 12.9h3" stroke="#666" stroke-width="1"/></svg><span class="a sb" style="left:400px;top:53px;color:#d00000;transform:scaleX(0.88)">#RU-Marathon</span><div class="a" style="left:501px;top:49px;width:120px;height:23px;border:1px solid #a9a592;border-radius:3px;background:linear-gradient(#dedbcc,#f0eee4);box-shadow:inset 1px 1px 1px #c4c0ae"></div><svg class="a" style="left:505px;top:53px" width="16" height="16" viewBox="0 0 16 16"><rect x="0.5" y="1.5" width="15" height="13" rx="1.5" fill="#fff" stroke="#3a3a50"/><rect x="1" y="2" width="14" height="3" fill="#2b4fc0"/><path d="M3 7.5h5M3 9.5h5M3 11.5h5M3 12.9h5" stroke="#1a8a1a" stroke-width="1"/><text x="9.3" y="13.5" font-family="Liberation Sans,sans-serif" font-weight="bold" font-size="9" fill="#1a7a1a">?</text></svg><span class="a sb" style="left:524px;top:54px;transform:scaleX(0.88)">Trooprm02</span><div class="a" style="left:0;right:0;top:75px;height:1px;background:#c8c5b4"></div><div class="a" style="left:0;right:0;top:76px;height:1px;background:#868578"></div></div>
<div id="mdi" class="a"><div class="w i" style="left:1px;top:1px;width:664px;height:416px"><div class="t"><svg class="a" style="left:8px;top:8px" width="16" height="16" viewBox="0 0 16 16"><rect x="0.5" y="1.5" width="15" height="13" rx="1.5" fill="#fff" stroke="#6a6880"/><rect x="1" y="2" width="14" height="3" fill="#2b4fc0"/><path d="M3 7.5h3M7 7.5h2M10 7.5h3M3 9.5h2M6 9.5h3M10 9.5h3M3 11.5h3M7 11.5h2M10 11.5h3M3 12.9h2M6 12.9h3M10 12.9h3" stroke="#d02020" stroke-width="1"/></svg><span class="a tti" style="left:25px;top:8px;letter-spacing:0.18px">Status: Jd123123 [+iwx] on All-Out-Hosting (irc.aohost.co.uk:6667)</span><div class="cb i" style="left:591px;top:6px"><svg width="19" height="19" viewBox="0 0 19 19"><rect x="4" y="12" width="7" height="3" fill="#eef2fc"/></svg></div><div class="cb i" style="left:614px;top:6px"><svg width="19" height="19" viewBox="0 0 19 19"><path d="M4.5 5.5h10v9h-10z M4.5 6.5h10" fill="none" stroke="#eef2fc" stroke-width="1"/><rect x="4" y="4" width="11" height="3" fill="#eef2fc"/></svg></div><div class="cb x i" style="left:637px;top:6px"><svg width="19" height="19" viewBox="0 0 19 19"><path d="M5 5l9 9M14 5l-9 9" stroke="#eef2fc" stroke-width="2.2" fill="none"/></svg></div></div><div class="c"><div class="a fx" style="left:4px;top:8px;"><div class="r">[Se</div><div class="">-</div><div class="m">-OF</div><div class="">-</div><div class="g">* Y</div><div class="g">thi</div><div class="">-</div><div class="g">* Y</div><div class="g">on</div><div class="">-</div><div class="">#RU</div><div class="">-</div><div class="">#RU</div><div class="">-</div><div class="">#RU</div><div class="">-</div><div class="">#RU</div><div class="">-</div><div class="m">-Ni</div><div class="">-</div><div class="m">-Ho</div><div class="">-</div></div><div class="a" style="left:0;right:0;top:361px;height:1px;background:#e4e2d8"></div></div></div><div class="w i" style="left:57px;top:57px;width:630px;height:389px"><div class="t"><div class="cb x i" style="left:605px;top:5px"><svg width="19" height="19" viewBox="0 0 19 19"><path d="M5 5l9 9M14 5l-9 9" stroke="#eef2fc" stroke-width="2.2" fill="none"/></svg></div></div><div class="c"><div class="a" style="left:0;right:0;top:333px;height:1px;background:#e4e2d8"></div></div></div><div class="w i" style="left:29px;top:29px;width:631px;height:389px"><div class="t"><svg class="a" style="left:8px;top:8px" width="16" height="16" viewBox="0 0 16 16"><rect x="0.5" y="1.5" width="15" height="13" rx="1.5" fill="#fff" stroke="#6a6880"/><rect x="1" y="2" width="14" height="3" fill="#2b4fc0"/><path d="M9.5 5v9" stroke="#777"/><path d="M3 7.5h5M3 9.5h5M3 11.5h5M3 12.9h5M11 7.5h3M11 9.5h3M11 11.5h3M11 12.9h3" stroke="#666" stroke-width="1"/></svg><span class="a tti" style="left:25px;top:8px;letter-spacing:0.12px">#hangout [109] [+CfmnrtT]: Welcome to Hangout, please read the MOTD for the ru...</span><div class="cb i" style="left:558px;top:5px"><svg width="19" height="19" viewBox="0 0 19 19"><rect x="4" y="12" width="7" height="3" fill="#eef2fc"/></svg></div><div class="cb i" style="left:581px;top:5px"><svg width="19" height="19" viewBox="0 0 19 19"><path d="M4.5 5.5h10v9h-10z M4.5 6.5h10" fill="none" stroke="#eef2fc" stroke-width="1"/><rect x="4" y="4" width="11" height="3" fill="#eef2fc"/></svg></div><div class="cb x i" style="left:604px;top:5px"><svg width="19" height="19" viewBox="0 0 19 19"><path d="M5 5l9 9M14 5l-9 9" stroke="#eef2fc" stroke-width="2.2" fill="none"/></svg></div></div><div class="c"><div class="a fx" style="left:4px;top:-3px;"><div class="g">* Atlantis sets mode: +v DaGrebX</div><div class="g">* ChavServ sets mode: +h DaGrebX</div><div class="n">* SSni</div><div class="g">* exny</div><div class="g">* Atla</div><div class="g">* exny</div><div class="g">* Chav</div><div class="g">* [AoB</div><div class="g">* Atla</div><div class="g">* {CTT</div><div class="g">* Atla</div><div class="n">* {CTT</div><div class="g">* Bl4c</div><div class="g">* Atla</div><div class="n">* proc</div><div class="g">* Troo</div><div class="g">* Atla</div><div class="n">* Troo</div><div class="g">* Ston</div><div class="g">* Atla</div><div class="n">* Ston</div></div><div class="sv" style="left:513px;top:0px;height:335px"><div class="sbtn" style="top:0"><svg class="a" style="left:3px;top:4px" width="9" height="6" viewBox="0 0 9 6"><path d="M1 5l3.5-3.5L8 5" fill="none" stroke="#4d6185" stroke-width="2"/></svg></div><div class="sbtn" style="top:318px"><svg class="a" style="left:3px;top:5px" width="9" height="6" viewBox="0 0 9 6"><path d="M1 1l3.5 3.5L8 1" fill="none" stroke="#4d6185" stroke-width="2"/></svg></div></div><div class="a fx" style="left:533px;top:1px;"><div class="">~Fnfall</div><div class="">~Hex</div></div><div class="sv" style="left:606px;top:0px;height:335px"><div class="sbtn" style="top:0"><svg class="a" style="left:3px;top:4px" width="9" height="6" viewBox="0 0 9 6"><path d="M1 5l3.5-3.5L8 5" fill="none" stroke="#4d6185" stroke-width="2"/></svg></div><div class="sbtn" style="top:318px"><svg class="a" style="left:3px;top:5px" width="9" height="6" viewBox="0 0 9 6"><path d="M1 1l3.5 3.5L8 1" fill="none" stroke="#4d6185" stroke-width="2"/></svg></div><div class="sth" style="top:17px;height:53px"><svg class="a" style="left:4px;top:22px" width="7" height="8" viewBox="0 0 7 8"><path d="M0 .5h6M0 2.5h6M0 4.5h6M0 6.5h6" stroke="#eef3fe"/><path d="M1 1.5h6M1 3.5h6M1 5.5h6M1 7.5h6" stroke="#8ca0d8"/></svg></div></div><div class="a" style="left:0;right:0;top:334px;height:1px;background:#e4e2d8"></div></div></div><div class="w i" style="left:113px;top:112px;width:631px;height:388px"><div class="t" style="height:28px"><div class="cb x i" style="left:605px;top:5px"><svg width="19" height="19" viewBox="0 0 19 19"><path d="M5 5l9 9M14 5l-9 9" stroke="#eef2fc" stroke-width="2.2" fill="none"/></svg></div></div><div class="c" style="top:28px"><div class="a fx" style="left:598px;top:1px;"><div class="">12</div><div class="">ewt</div><div class="">n</div><div class="">d</div><div class="">&nbsp;</div><div class="">&nbsp;</div><div class="">&nbsp;</div><div class="">3</div><div class="">&nbsp;</div><div class="">o</div><div class="">&nbsp;</div><div class="">&nbsp;</div><div class="">&nbsp;</div><div class="">Z</div></div><div class="a fx" style="left:22px;top:317px;font-weight:bold;-webkit-text-stroke:0.7px #000;letter-spacing:0.75px"><div class="">Channel!</div></div><div class="sv" style="left:512px;top:0px;height:335px"><div class="sbtn" style="top:0"><svg class="a" style="left:3px;top:4px" width="9" height="6" viewBox="0 0 9 6"><path d="M1 5l3.5-3.5L8 5" fill="none" stroke="#4d6185" stroke-width="2"/></svg></div><div class="sbtn" style="top:318px"><svg class="a" style="left:3px;top:5px" width="9" height="6" viewBox="0 0 9 6"><path d="M1 1l3.5 3.5L8 1" fill="none" stroke="#4d6185" stroke-width="2"/></svg></div></div><div class="a" style="left:0;right:0;top:335px;height:1px;background:#e4e2d8"></div></div></div><div class="w ac" style="left:85px;top:84px;width:631px;height:375px"><div class="t"><svg class="a" style="left:8px;top:9px" width="16" height="16" viewBox="0 0 16 16"><rect x="0.5" y="1.5" width="15" height="13" rx="1.5" fill="#fff" stroke="#3a3a50"/><rect x="1" y="2" width="14" height="3" fill="#2b4fc0"/><path d="M3 7.5h5M3 9.5h5M3 11.5h5M3 12.9h5" stroke="#1a8a1a" stroke-width="1"/><text x="9.3" y="13.5" font-family="Liberation Sans,sans-serif" font-weight="bold" font-size="9" fill="#1a7a1a">?</text></svg><span class="a tt" style="left:27px;top:9px;letter-spacing:-0.06px">Trooprm02 (Jdsmith@IA-NET-D160ECFB.cpe.net.cable.rogers.com)</span><div class="cb" style="left:558px;top:6px"><svg width="19" height="19" viewBox="0 0 19 19"><rect x="4" y="12" width="7" height="3" fill="#fff"/></svg></div><div class="cb" style="left:581px;top:6px"><svg width="19" height="19" viewBox="0 0 19 19"><path d="M4.5 5.5h10v9h-10z M4.5 6.5h10" fill="none" stroke="#fff" stroke-width="1"/><rect x="4" y="4" width="11" height="3" fill="#fff"/></svg></div><div class="cb x" style="left:604px;top:6px"><svg width="19" height="19" viewBox="0 0 19 19"><path d="M5 5l9 9M14 5l-9 9" stroke="#fff" stroke-width="2.2" fill="none"/></svg></div></div><div class="c" style="top:31px"><div class="a fx" style="left:3px;top:221px;"><div class="">&lt;Jd123123&gt; 1v1 now?</div><div class="">&lt;Trooprm02&gt; no</div><div class="">&lt;Jd123123&gt; why?</div><div class="">&lt;Trooprm02&gt; Just no</div><div class="">&lt;Jd123123&gt; why?</div><div class="">No such nick/channel</div></div><div class="sv" style="left:606px;top:0px;height:318px"><div class="sbtn" style="top:0"><svg class="a" style="left:3px;top:4px" width="9" height="6" viewBox="0 0 9 6"><path d="M1 5l3.5-3.5L8 5" fill="none" stroke="#4d6185" stroke-width="2"/></svg></div><div class="sbtn" style="top:301px"><svg class="a" style="left:3px;top:5px" width="9" height="6" viewBox="0 0 9 6"><path d="M1 1l3.5 3.5L8 1" fill="none" stroke="#4d6185" stroke-width="2"/></svg></div><div class="sth" style="top:75px;height:224px"><svg class="a" style="left:4px;top:108px" width="7" height="8" viewBox="0 0 7 8"><path d="M0 .5h6M0 2.5h6M0 4.5h6M0 6.5h6" stroke="#eef3fe"/><path d="M1 1.5h6M1 3.5h6M1 5.5h6M1 7.5h6" stroke="#8ca0d8"/></svg></div></div><div class="a" style="left:0;right:0;top:318px;height:2px;background:#e8e6dc"></div><div class="a" style="left:3px;top:323px;width:1px;height:15px;background:#000"></div></div></div></div>
<div id="mbot" class="a"></div><div class="a" style="left:4px;top:30px;width:1px;height:587px;background:#f4f3ee"></div><div class="a" style="left:774px;top:107px;width:1px;height:510px;background:#fff"></div><div class="a" style="left:4px;top:616px;width:771px;height:1px;background:#fff"></div>
</div>
<div id="tb" class="a"><div class="a" style="left:0;top:0;width:98px;height:30px;border-radius:0 12px 12px 0;background:linear-gradient(#3a8a3a 0,#5cb85c 2px,#3c9a3c 5px,#3a9439 18px,#2c7a2c 30px);box-shadow:inset -3px 0 6px #1e5a1e, 2px 0 3px #1a3a9a"></div><svg class="a" style="left:10px;top:6px" width="21" height="19" viewBox="0 0 21 19"><path d="M3 2c2-1.500 4-1.500 6 0l-1.500 6c-2-1.500-4-1.500-6 0z" fill="#e8502a"/><path d="M10.500 2.500c2 1.500 4 1.500 6 0l-1.500 6c-2 1.500-4 1.500-6 0z" fill="#7ac043"/><path d="M1.200 9.500c2-1.500 4-1.500 6 0l-1.500 6c-2-1.500-4-1.500-6 0z" fill="#3a80e8"/><path d="M8.700 10c2 1.500 4 1.500 6 0l-1.500 6c-2 1.500-4 1.500-6 0z" fill="#f4c020"/></svg><span class="a" style="left:35px;top:3px;font-family:'Liberation Sans',sans-serif;font-style:italic;font-weight:bold;font-size:19px;color:#fff;text-shadow:1px 1px 1px #2a4a1a;letter-spacing:-0.6px">start</span><div class="a" style="left:107px;top:4px;width:156px;height:23px;border-radius:3px;background:linear-gradient(#5a9cf2 0,#3f84ee 3px,#3a7eea 16px,#3476e2 100%);box-shadow:inset 1px 1px 0 #6fb0fa, inset -1px -1px 0 #2c62c8"></div><div class="a" style="left:116px;top:9px;width:14px;height:10px;background:#fff;border:1px solid #dfe8f8"></div><span class="a ui" style="left:135px;top:9px;color:#fff;letter-spacing:-0.05px">Renegade</span><div class="a" style="left:266px;top:4px;width:156px;height:23px;border-radius:3px;background:linear-gradient(#1a4aa8 0,#1e52b7 4px,#2158c0 100%);box-shadow:inset 1px 1px 2px #123a8a"></div><svg class="a" style="left:275px;top:7px" width="16" height="16" viewBox="0 0 16 16"><rect x="2" y="0" width="10" height="8" fill="#1a1a8a"/><rect x="4" y="1.500" width="2" height="3" fill="#fff"/><rect x="8" y="1.500" width="2" height="3" fill="#fff"/><rect x="0" y="7" width="8" height="9" fill="#d01818"/><rect x="7" y="7" width="6" height="4" fill="#d01818"/><circle cx="11.500" cy="12" r="3.600" fill="#f0d020" stroke="#222" stroke-width="0.800"/><path d="M11.500 12l4-2v4z" fill="#1a3ab0"/></svg><span class="a ui" style="left:293px;top:9px;color:#fff;letter-spacing:-0.05px">mIRC</span><div class="a" style="left:424px;top:4px;width:156px;height:23px;border-radius:3px;background:linear-gradient(#5a9cf2 0,#3f84ee 3px,#3a7eea 16px,#3476e2 100%);box-shadow:inset 1px 1px 0 #6fb0fa, inset -1px -1px 0 #2c62c8"></div><svg class="a" style="left:433px;top:7px" width="17" height="16" viewBox="0 0 17 16"><circle cx="10.500" cy="3.500" r="3" fill="#5aa040"/><path d="M6 15c0-6 2-8 4.500-8s4.500 2 4.500 8z" fill="#4a9a3a"/><circle cx="5" cy="5" r="2.800" fill="#e8a050"/><path d="M0.500 15.500c0-5 2-7 4.500-7s4.500 2 4.500 7z" fill="#d05a28"/></svg><span class="a ui" style="left:452px;top:9px;color:#fff;letter-spacing:-0.05px">MSN Messenger</span><div class="a" style="left:583px;top:4px;width:156px;height:23px;border-radius:3px;background:linear-gradient(#5a9cf2 0,#3f84ee 3px,#3a7eea 16px,#3476e2 100%);box-shadow:inset 1px 1px 0 #6fb0fa, inset -1px -1px 0 #2c62c8"></div><svg class="a" style="left:592px;top:7px" width="18" height="16" viewBox="0 0 18 16"><circle cx="7" cy="7" r="3" fill="#9ac8a0"/><path d="M1 16c0-6 3-7 6-7s5 2 5 7z" fill="#4a9a6a"/><ellipse cx="12" cy="4" rx="5.500" ry="3.500" fill="#fff" stroke="#8a9ab0" stroke-width="0.600"/><path d="M9 3.500h6M9 5h5" stroke="#777" stroke-width="0.700"/></svg><span class="a ui" style="left:611px;top:9px;color:#fff;letter-spacing:-0.05px">Dhoom™ - Conversat...</span><div class="a" style="left:742px;top:4px;width:156px;height:23px;border-radius:3px;background:linear-gradient(#5a9cf2 0,#3f84ee 3px,#3a7eea 16px,#3476e2 100%);box-shadow:inset 1px 1px 0 #6fb0fa, inset -1px -1px 0 #2c62c8"></div><svg class="a" style="left:751px;top:7px" width="16" height="16" viewBox="0 0 16 16"><circle cx="8" cy="8" r="7.500" fill="#e8741a"/><circle cx="8.500" cy="7.500" r="4.500" fill="#3a5ac8"/><path d="M1 6c1-4 6-6 10-4-3 0-5 1-5 3 2 0 3 1 3 3-2-1-4 0-4 2s3 3 6 1c-2 4-8 4-10-1z" fill="#f0a020"/></svg><span class="a ui" style="left:771px;top:9px;color:#fff;letter-spacing:-0.05px">Renegade Public For...</span><div class="a" style="left:913px;top:0;width:111px;height:30px;background:linear-gradient(#1a7ad8 0,#2aa0f2 3px,#1594ec 6px,#1290e8 20px,#0e6fc4 30px);border-left:1px solid #0e4aa8;box-shadow:inset 1px 0 0 #3ab0f8"></div><svg class="a" style="left:904px;top:6px" width="18" height="18" viewBox="0 0 18 18"><defs><radialGradient id="tr" cx="0.35" cy="0.3" r="0.8"><stop offset="0" stop-color="#8ac4ff"/><stop offset="1" stop-color="#1a5ad0"/></radialGradient></defs><circle cx="9" cy="9" r="8.500" fill="url(#tr)" stroke="#cfe4ff" stroke-width="0.800"/><path d="M10.500 5l-4 4 4 4" stroke="#fff" stroke-width="2" fill="none"/></svg><svg class="a" style="left:925px;top:7px" width="18" height="17" viewBox="0 0 18 17"><circle cx="8" cy="4" r="3.200" fill="#a8c878"/><path d="M2 17c0-7 3-9 6-9s6 2 6 9z" fill="#7ab060"/><circle cx="13.500" cy="9" r="2.300" fill="#e88838"/><path d="M10 17c0-4 1.500-5.500 3.500-5.500s3.500 1.500 3.500 5.500z" fill="#e07028"/></svg><div class="a" style="left:946px;top:9px;width:14px;height:12px;background:#fff"></div><svg class="a" style="left:946px;top:9px" width="14" height="12" viewBox="0 0 14 12"><path d="M2 8l4-3 3 2 4-4M3 3l5 6" stroke="#111" stroke-width="1.600" fill="none"/></svg><span class="a ui" style="left:968px;top:9px;color:#fff">3:50 PM</span></div>
</body></html>
